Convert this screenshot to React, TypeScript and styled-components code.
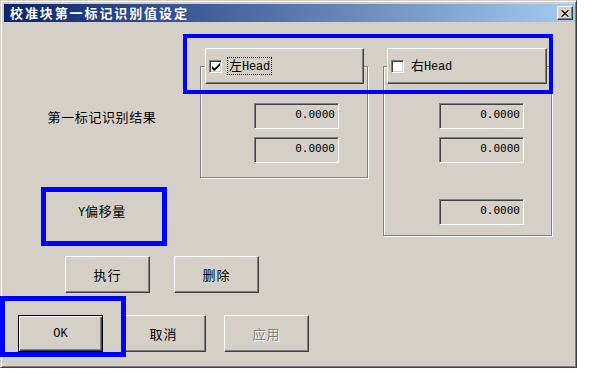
import React from 'react';
import styled, { createGlobalStyle } from 'styled-components';

const GlobalStyle = createGlobalStyle`
  html, body { margin: 0; padding: 0; background: #ffffff; }
  body { font-family: "Noto Sans CJK SC", "Noto Sans", sans-serif; }
  * { box-sizing: border-box; }
`;

const Stage = styled.div`
  position: relative;
  width: 591px;
  height: 374px;
  background: #ffffff;
  overflow: hidden;
`;

const Window = styled.div`
  width: 577px;
  height: 368px;
  background: #d4d0c8;
  border: 1px solid;
  border-color: #d4d0c8 #404040 #404040 #d4d0c8;
  box-shadow: inset 1px 1px 0 #ffffff, inset -1px -1px 0 #808080;
  padding: 3px 1px 2px 3px;
  display: flex;
  flex-direction: column;
`;

const TitleBar = styled.div`
  height: 18px;
  flex: none;
  display: flex;
  align-items: center;
  justify-content: space-between;
  padding: 0 2px 0 6px;
  background: linear-gradient(to right, #0a246a 0%, #a6caf0 100%);
`;

const TitleText = styled.span`
  color: #ffffff;
  font-weight: 700;
  font-size: 13px;
  letter-spacing: 1.9px;
  line-height: 18px;
`;

const CaptionButton = styled.div`
  width: 16px;
  height: 14px;
  background: #d4d0c8;
  border: 1px solid;
  border-color: #ffffff #404040 #404040 #ffffff;
  box-shadow: inset -1px -1px 0 #808080;
  display: flex;
  align-items: center;
  justify-content: center;
`;

const Client = styled.div`
  flex: 1;
  display: flex;
  flex-direction: column;
  padding-top: 26px;
`;

const TopSection = styled.div`
  display: flex;
  align-items: flex-start;
  height: 188px;
`;

const LabelsCol = styled.div`
  width: 196px;
  display: flex;
  flex-direction: column;
  align-items: center;
`;

const Label = styled.div<{ $mt: number }>`
  margin-top: ${p => p.$mt}px;
  font-size: 13px;
  line-height: 18px;
  letter-spacing: 0.6px;
  color: #000000;
  white-space: nowrap;
`;

const Group = styled.fieldset<{ $w: number; $pl: number; $pr: number; $pb: number; $ml: number }>`
  margin: 0 0 0 ${p => p.$ml}px;
  width: ${p => p.$w}px;
  padding: 19px ${p => p.$pr}px ${p => p.$pb}px ${p => p.$pl}px;
  border: 1px solid #808080;
  box-shadow: inset 1px 1px 0 #ffffff, 1px 1px 0 #ffffff;
  min-width: 0;
  display: flex;
  flex-direction: column;
  align-items: flex-end;
  gap: 8px;
`;

const Legend = styled.legend`
  padding: 0;
  margin: 0;
`;

const HeadButton = styled.div<{ $w: number }>`
  width: ${p => p.$w}px;
  height: 36px;
  background: #d4d0c8;
  border: 1px solid;
  border-color: #ffffff #404040 #404040 #ffffff;
  box-shadow: inset -1px -1px 0 #808080;
  display: flex;
  align-items: center;
  padding-left: 3px;
  gap: 5px;
`;

const CheckBox = styled.div`
  width: 13px;
  height: 13px;
  background: #ffffff;
  border: 1px solid;
  border-color: #808080 #ffffff #ffffff #808080;
  box-shadow: inset 1px 1px 0 #404040, inset -1px -1px 0 #d4d0c8;
  display: flex;
  align-items: center;
  justify-content: center;
  padding: 1px 0 0 1px;
  flex: none;
`;

const HeadText = styled.span<{ $focus?: boolean }>`
  font-size: 13px;
  line-height: 14px;
  padding: 0 1px;
  border: 1px dotted ${p => (p.$focus ? '#000000' : 'transparent')};
  color: #000000;
  white-space: nowrap;
`;

const Latin = styled.span`
  font-family: "Liberation Mono", monospace;
  font-size: 12px;
  font-weight: 400;
  letter-spacing: -0.2px;
`;

const Field = styled.div<{ $mt?: number }>`
  width: 85px;
  height: 26px;
  margin-top: ${p => p.$mt ?? 0}px;
  background: #d4d0c8;
  border: 1px solid;
  border-color: #808080 #ffffff #ffffff #808080;
  box-shadow: inset 1px 1px 0 #404040, inset -1px -1px 0 #d4d0c8;
  display: flex;
  align-items: center;
  justify-content: flex-end;
  padding: 0 3px 3px 0;
  font-family: "DejaVu Sans Mono", monospace;
  font-size: 11px;
  color: #000000;
`;

const ButtonRow = styled.div<{ $mt: number; $pl: number; $gap: number }>`
  display: flex;
  margin-top: ${p => p.$mt}px;
  padding-left: ${p => p.$pl}px;
  gap: ${p => p.$gap}px;
`;

const Button = styled.div<{ $default?: boolean; $disabled?: boolean }>`
  width: 85px;
  height: 37px;
  background: #d4d0c8;
  border: 1px solid;
  border-color: ${p => (p.$default ? '#000000' : '#ffffff #404040 #404040 #ffffff')};
  box-shadow: ${p =>
    p.$default
      ? 'inset 1px 1px 0 #ffffff, inset -1px -1px 0 #404040, inset -2px -2px 0 #808080'
      : 'inset -1px -1px 0 #808080'};
  display: flex;
  align-items: center;
  justify-content: center;
  font-size: 13px;
  letter-spacing: 1px;
  color: ${p => (p.$disabled ? '#808080' : '#000000')};
  text-shadow: ${p => (p.$disabled ? '1px 1px 0 #ffffff' : 'none')};
`;

const OkText = styled.span`
  font-family: "Liberation Mono", monospace;
  font-size: 12px;
  font-weight: 400;
  letter-spacing: 0;
`;

const Annotation = styled.div<{ $x: number; $y: number; $w: number; $h: number; $t: number }>`
  position: absolute;
  left: ${p => p.$x}px;
  top: ${p => p.$y}px;
  width: ${p => p.$w}px;
  height: ${p => p.$h}px;
  border: ${p => p.$t}px solid #0000ff;
  pointer-events: none;
`;

const CloseIcon = () => (
  <svg width="8" height="7" viewBox="0 0 8 7">
    <path d="M0.5 0.5 L7 6.5 M1.5 0.5 L7.5 6.5 M7 0.5 L0.5 6.5 M7.5 0.5 L1 6.5" stroke="#000" strokeWidth="1" fill="none" />
  </svg>
);

const CheckIcon = () => (
  <svg width="8" height="8" viewBox="0 0 8 8">
    <path d="M0 3 L0 6 L2.5 8 L8 2.5 L8 0 L2.5 5.5 Z" fill="#000" />
  </svg>
);

export default function App() {
  return (
    <Stage>
      <GlobalStyle />
      <Window>
        <TitleBar>
          <TitleText>校准块第一标记识别值设定</TitleText>
          <CaptionButton>
            <CloseIcon />
          </CaptionButton>
        </TitleBar>
        <Client>
          <TopSection>
            <LabelsCol>
              <Label $mt={60}>第一标记识别结果</Label>
              <Label $mt={76}>
                <Latin>Y</Latin>偏移量
              </Label>
            </LabelsCol>
            <Group $w={168} $pl={4} $pr={28} $pb={14} $ml={0}>
              <Legend>
                <HeadButton $w={159}>
                  <CheckBox>
                    <CheckIcon />
                  </CheckBox>
                  <HeadText $focus>
                    左<Latin>Head</Latin>
                  </HeadText>
                </HeadButton>
              </Legend>
              <Field>0.0000</Field>
              <Field>0.0000</Field>
            </Group>
            <Group $w={169} $pl={3} $pr={27} $pb={10} $ml={15}>
              <Legend>
                <HeadButton $w={160}>
                  <CheckBox />
                  <HeadText>
                    右<Latin>Head</Latin>
                  </HeadText>
                </HeadButton>
              </Legend>
              <Field>0.0000</Field>
              <Field>0.0000</Field>
              <Field $mt={28}>0.0000</Field>
            </Group>
          </TopSection>
          <ButtonRow $mt={20} $pl={61} $gap={24}>
            <Button>执行</Button>
            <Button>删除</Button>
          </ButtonRow>
          <ButtonRow $mt={22} $pl={14} $gap={18}>
            <Button $default>
              <OkText>OK</OkText>
            </Button>
            <Button>取消</Button>
            <Button $disabled>应用</Button>
          </ButtonRow>
        </Client>
      </Window>
      <Annotation $x={183} $y={34} $w={370} $h={60} $t={4} />
      <Annotation $x={41} $y={187} $w={126} $h={59} $t={5} />
      <Annotation $x={0} $y={296} $w={126} $h={61} $t={5} />
    </Stage>
  );
}
